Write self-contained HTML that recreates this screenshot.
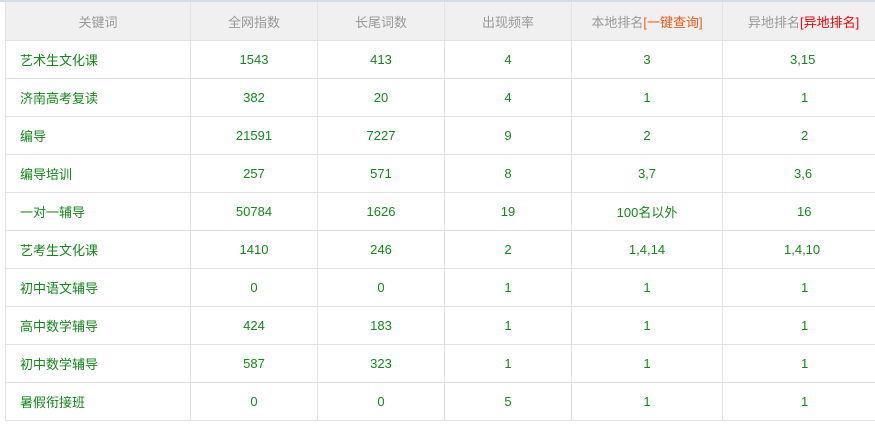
<!DOCTYPE html>
<html><head><meta charset="utf-8"><style>
body{margin:0;background:#fff;width:875px;height:428px;overflow:hidden;font-family:"Liberation Sans","Noto Sans CJK SC",sans-serif;font-size:13px}
.top{position:absolute;left:0;top:0;width:875px;height:2px;background:#d4dcea}
table{position:absolute;left:5px;top:2px;border-collapse:collapse;table-layout:fixed;width:880px}
td,th{border:1px solid #e3e3e3;text-align:center;height:37px;padding:0;color:#13891a;font-weight:normal;white-space:nowrap}
th{background:#f0f0f0;color:#999;height:38px;border-top:none}
td:first-child{text-align:left;padding-left:14px}
.o{color:#f55a1a}.r{color:#f00}
</style></head><body>
<div class="top"></div>
<table>
<colgroup><col style="width:185px"><col style="width:127px"><col style="width:127px"><col style="width:127px"><col style="width:151px"><col style="width:163px"></colgroup>
<tr><th>关键词</th><th>全网指数</th><th>长尾词数</th><th>出现频率</th><th>本地排名<span class="o">[一键查询]</span></th><th style="text-align:left;padding-left:25px">异地排名<span class="r">[异地排名]</span></th></tr>
<tr><td>艺术生文化课</td><td>1543</td><td>413</td><td>4</td><td>3</td><td style="text-align:left;padding-left:67px">3,15</td></tr>
<tr><td>济南高考复读</td><td>382</td><td>20</td><td>4</td><td>1</td><td style="text-align:left;padding-left:78px">1</td></tr>
<tr><td>编导</td><td>21591</td><td>7227</td><td>9</td><td>2</td><td style="text-align:left;padding-left:78px">2</td></tr>
<tr><td>编导培训</td><td>257</td><td>571</td><td>8</td><td>3,7</td><td style="text-align:left;padding-left:71px">3,6</td></tr>
<tr><td>一对一辅导</td><td>50784</td><td>1626</td><td>19</td><td>100名以外</td><td style="text-align:left;padding-left:74px">16</td></tr>
<tr><td>艺考生文化课</td><td>1410</td><td>246</td><td>2</td><td>1,4,14</td><td style="text-align:left;padding-left:61px">1,4,10</td></tr>
<tr><td>初中语文辅导</td><td>0</td><td>0</td><td>1</td><td>1</td><td style="text-align:left;padding-left:78px">1</td></tr>
<tr><td>高中数学辅导</td><td>424</td><td>183</td><td>1</td><td>1</td><td style="text-align:left;padding-left:78px">1</td></tr>
<tr><td>初中数学辅导</td><td>587</td><td>323</td><td>1</td><td>1</td><td style="text-align:left;padding-left:78px">1</td></tr>
<tr><td>暑假衔接班</td><td>0</td><td>0</td><td>5</td><td>1</td><td style="text-align:left;padding-left:78px">1</td></tr>
</table>
</body></html>
